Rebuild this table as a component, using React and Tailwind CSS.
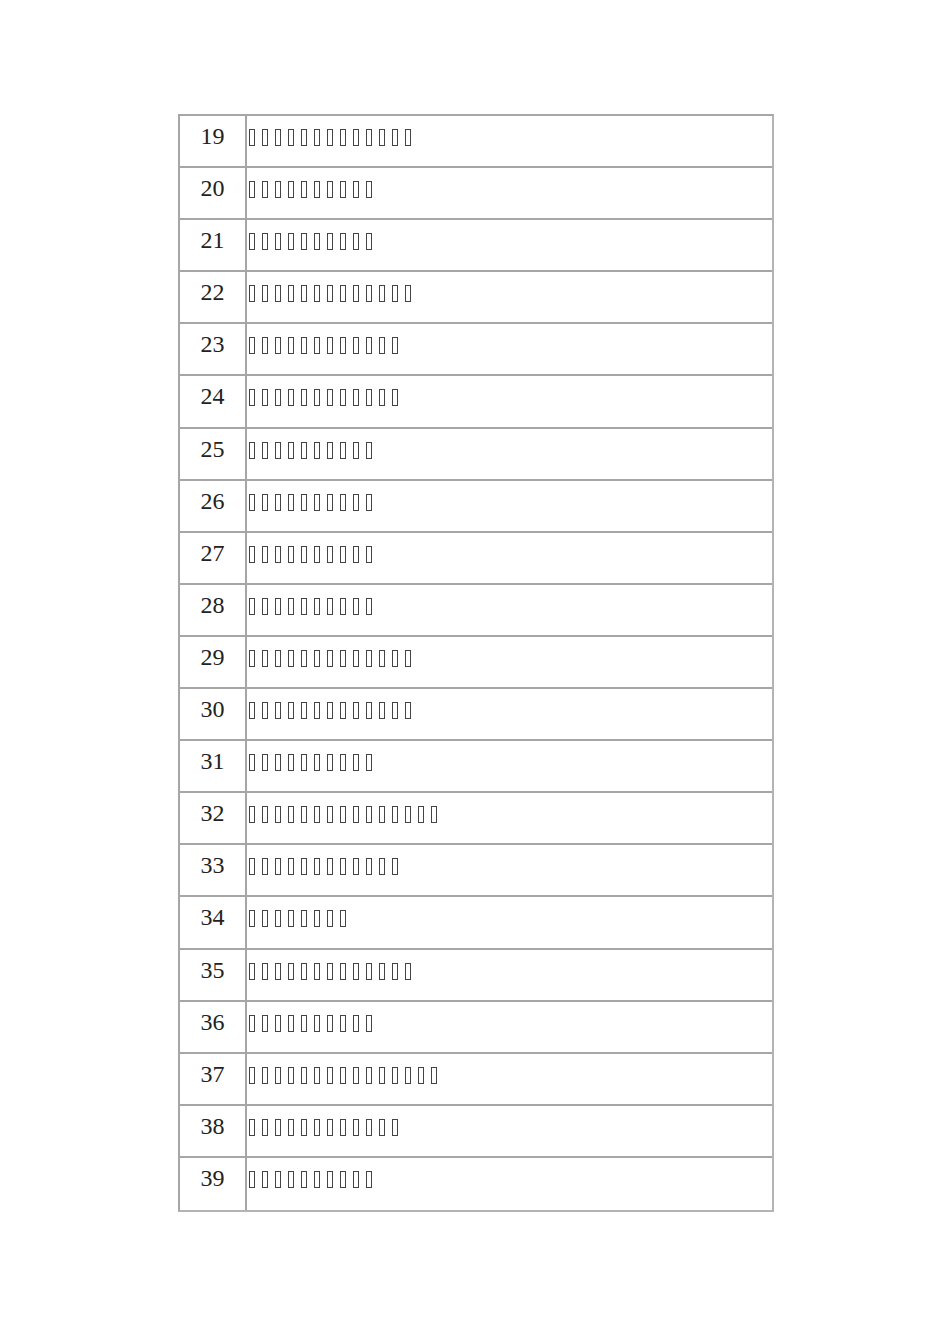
import React from 'react';

const rows = [
  [19, 13], [20, 10], [21, 10], [22, 13], [23, 12], [24, 12], [25, 10],
  [26, 10], [27, 10], [28, 10], [29, 13], [30, 13], [31, 10], [32, 15],
  [33, 12], [34, 8], [35, 13], [36, 10], [37, 15], [38, 12], [39, 10],
];

function Tofu({ count }) {
  return (
    <div className="flex gap-[7px] pt-[13px] pl-[2px]">
      {Array.from({ length: count }).map((_, i) => (
        <span key={i} className="inline-block w-[6px] h-[17px] border border-[#444]" />
      ))}
    </div>
  );
}

export default function App() {
  return (
    <div className="min-h-[1344px] bg-white pt-[114px]" style={{ fontFamily: '"Liberation Serif", "DejaVu Serif", serif' }}>
      <div className="ml-[178px] w-[596px] border-2 border-[#a6a6a6] border-r-[#b4b4b4] border-b-[#b4b4b4]">
        {rows.map(([num, count], i) => (
          <div
            key={num}
            className={`flex h-[52.1px] ${i < rows.length - 1 ? 'border-b-2 border-[#a6a6a6]' : ''}`}
          >
            <div className="w-[67px] shrink-0 border-r-2 border-[#a6a6a6] text-center text-[24px] leading-none pt-[8px] text-[#222]">
              {num}
            </div>
            <div className="flex-1">
              <Tofu count={count} />
            </div>
          </div>
        ))}
      </div>
    </div>
  );
}
